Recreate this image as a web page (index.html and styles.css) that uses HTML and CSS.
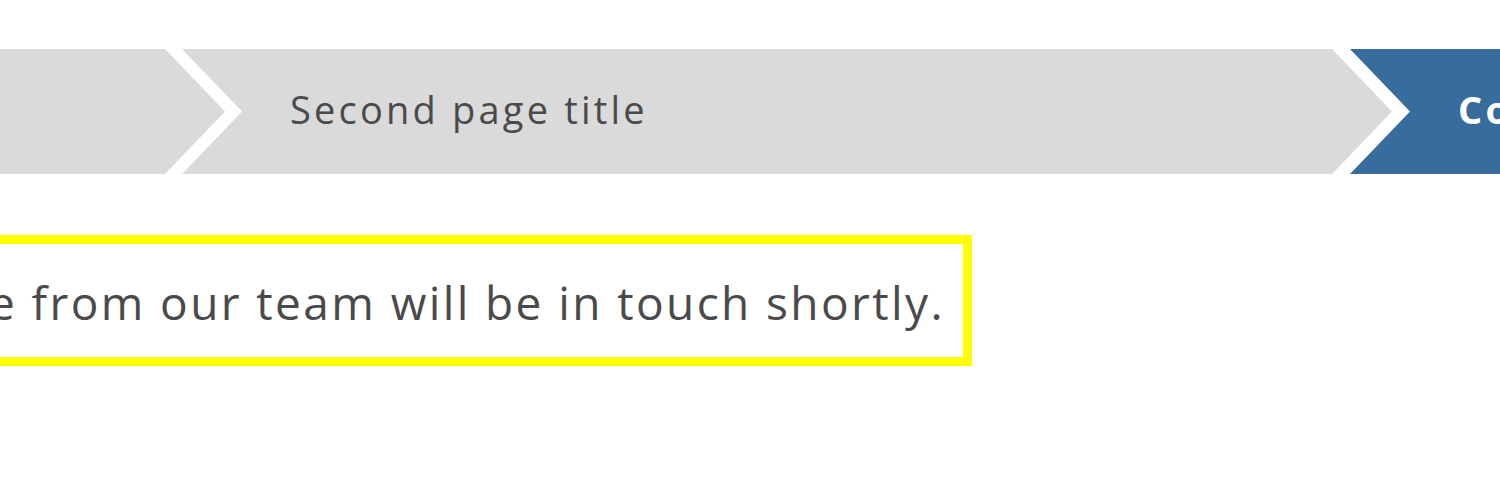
FILE: index.html
```html
<!DOCTYPE html>
<html>
<head>
<meta charset="utf-8">
<link rel="stylesheet" href="styles.css">
</head>
<body>
<nav class="steps">
  <div class="step step-first"></div>
  <div class="step step-mid"><span class="step-label">Second page title</span></div>
  <div class="step step-active"><span class="step-label">Confirmation</span></div>
</nav>
<div class="notice-row">
  <div class="notice">Thank you. Someone from our team will be in touch shortly.</div>
</div>
</body>
</html>
```
FILE: styles.css
```css
html, body {
  margin: 0;
  padding: 0;
  background: #ffffff;
  overflow: hidden;
}
body {
  font-family: "Open Sans", "Lato", sans-serif;
  color: #4a4a4a;
  width: 1500px;
  height: 500px;
}
.steps {
  display: flex;
  margin-top: 49px;
  height: 125px;
  width: 1500px;
  overflow: hidden;
}
.step {
  flex-shrink: 0;
  height: 125px;
  display: flex;
  align-items: center;
  background: #dadada;
  box-sizing: border-box;
}
.step-first {
  width: 225px;
  clip-path: polygon(0 0, calc(100% - 60px) 0, 100% 50%, calc(100% - 60px) 100%, 0 100%);
}
.step-mid {
  width: 1210px;
  margin-left: -43px;
  padding-left: 108px;
  clip-path: polygon(0 0, calc(100% - 60px) 0, 100% 50%, calc(100% - 60px) 100%, 0 100%, 60px 50%);
}
.step-active {
  width: 300px;
  margin-left: -42px;
  padding-left: 108px;
  background: #386c9c;
  color: #ffffff;
  font-weight: 700;
  clip-path: polygon(0 0, 100% 0, 100% 100%, 0 100%, 60px 50%);
}
.step-label {
  font-size: 38px;
  letter-spacing: 3.2px;
  white-space: nowrap;
  padding-bottom: 6px;
}
.notice-row {
  display: flex;
  justify-content: flex-end;
  width: 972px;
  margin-top: 61px;
}
.notice {
  flex-shrink: 0;
  white-space: nowrap;
  border: 9px solid #ffff00;
  height: 113px;
  line-height: 116px;
  padding: 0 18px 0 0;
  font-size: 46px;
  letter-spacing: 2.4px;
  color: #4a4a4a;
}
```
